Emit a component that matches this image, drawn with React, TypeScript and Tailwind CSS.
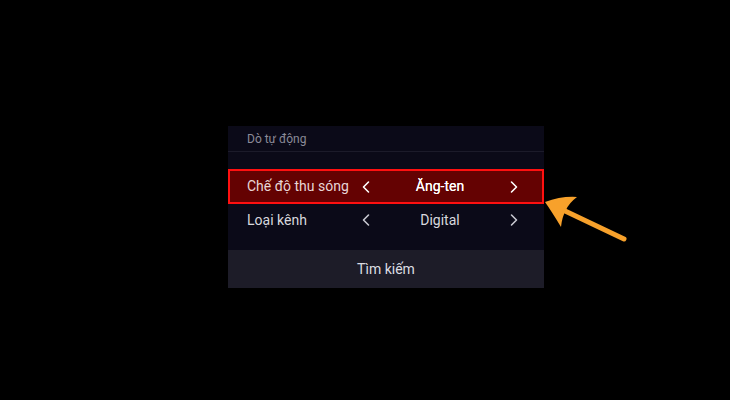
import React from "react";

function Chevron({ dir }: { dir: "left" | "right" }) {
  return (
    <svg width="12" height="14" viewBox="0 0 12 14" className="shrink-0">
      <path
        d={dir === "left" ? "M8.5 2 L3.5 7 L8.5 12" : "M3.5 2 L8.5 7 L3.5 12"}
        fill="none"
        stroke="currentColor"
        strokeWidth="1.6"
        strokeLinecap="round"
        strokeLinejoin="round"
      />
    </svg>
  );
}

function OptionRow({ label, value, active }: { label: string; value: string; active?: boolean }) {
  return (
    <div
      className={
        active
          ? "flex h-[35px] items-center border-2 border-[#ff1010] bg-[#640202] pl-[17px]"
          : "flex h-[32px] items-center pl-[19px]"
      }
    >
      <span className={active ? "w-[113px] text-[14px] text-[#e8d6d6]" : "w-[113px] text-[14px] text-[#d8d8de]"}>
        {label}
      </span>
      <span className={active ? "text-white" : "text-[#c8c8d0]"}>
        <Chevron dir="left" />
      </span>
      <span
        className={
          active
            ? "w-[136px] text-center text-[14px] text-white [text-shadow:0_0_0.4px_#fff]"
            : "w-[136px] text-center text-[14px] text-[#d8d8de]"
        }
      >
        {value}
      </span>
      <span className={active ? "text-white" : "text-[#c8c8d0]"}>
        <Chevron dir="right" />
      </span>
    </div>
  );
}

export default function App() {
  return (
    <div
      className="relative h-[400px] w-[730px] overflow-hidden bg-black pl-[228px] pt-[126px]"
      style={{ fontFamily: "Roboto, 'Noto Sans', sans-serif" }}
    >
      {/* Auto-scan panel */}
      <div className="flex w-[316px] flex-col bg-[#0b0a18]">
        <div className="flex h-[26px] items-center border-b border-[#1c1b2a] pl-[19px] text-[12px] text-[#8c8b98]">
          Dò tự động
        </div>
        <div className="h-[17px]" />
        <OptionRow label="Chế độ thu sóng" value="Ăng-ten" active />
        <OptionRow label="Loại kênh" value="Digital" />
        <div className="h-[14px]" />
        <button className="flex h-[38px] items-center justify-center bg-[#1d1c28] text-[14px] text-[#dcdce2]">
          Tìm kiếm
        </button>
      </div>

      {/* Orange pointer arrow */}
      <svg className="pointer-events-none absolute left-0 top-0" width="730" height="400" viewBox="0 0 730 400">
        <line x1="563" y1="210" x2="624" y2="239" stroke="#f7a12b" strokeWidth="5" strokeLinecap="round" />
        <path
          d="M545 202 Q561 196 577 197 Q569 203 566 210 Q562 217 561 227 Q552 212 545 202 Z"
          fill="#f7a12b"
        />
      </svg>
    </div>
  );
}
